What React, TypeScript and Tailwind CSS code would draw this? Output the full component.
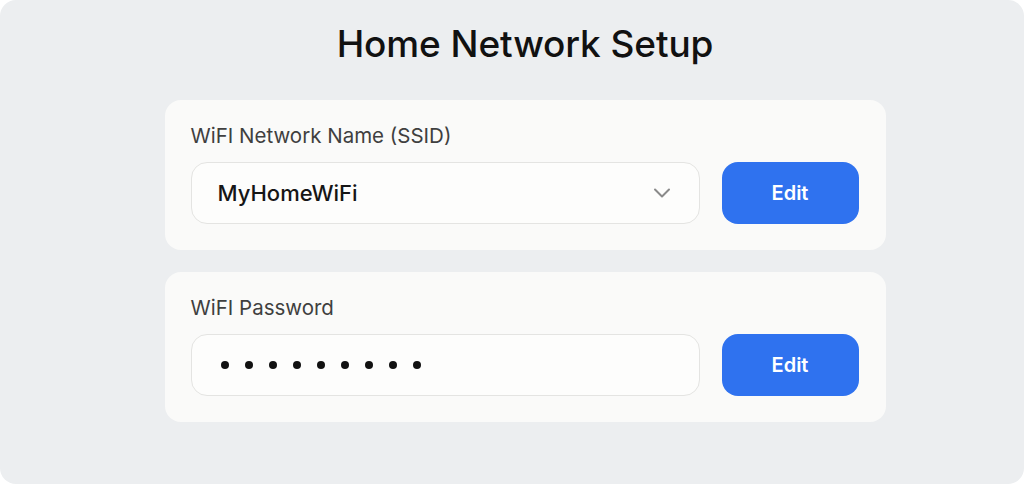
import { ReactNode } from "react";

function Chevron() {
  return (
    <svg width="20" height="12" viewBox="0 0 20 12" fill="none">
      <polyline
        points="3,2.5 10,9.5 17,2.5"
        stroke="#8a8a8a"
        strokeWidth="2"
        strokeLinecap="round"
        strokeLinejoin="round"
      />
    </svg>
  );
}

function EditButton() {
  return (
    <button className="w-[137px] h-[62px] shrink-0 rounded-2xl bg-[#2f72ef] text-white text-[20px] font-semibold">
      Edit
    </button>
  );
}

function FieldCard({ label, children }: { label: string; children: ReactNode }) {
  return (
    <section className="w-[721px] rounded-2xl bg-[#fafaf9] pt-[22px] pb-[26px] pl-[26px] pr-[27px]">
      <div className="text-[20.5px] leading-[28px] text-[#3f3f3f]">{label}</div>
      <div className="mt-3 flex items-center gap-[22px]">
        <div className="w-[509px] h-[62px] rounded-2xl border border-[#e4e4e2] bg-[#fdfdfc] flex items-center">
          {children}
        </div>
        <EditButton />
      </div>
    </section>
  );
}

export default function App() {
  const dots = Array.from({ length: 9 });
  return (
    <div className="w-[1024px] h-[484px] bg-white" style={{ fontFamily: "Inter, 'Noto Sans', sans-serif" }}>
      <div className="h-full rounded-2xl bg-[#eceef0] flex flex-col items-center pt-5 pl-[26px]">
        <h1 className="text-[37px] leading-[48px] font-medium text-[#111] tracking-[-0.1px]">
          Home Network Setup
        </h1>
        <div className="mt-8 flex flex-col gap-[22px]">
          <FieldCard label="WiFI Network Name (SSID)">
            <div className="flex-1 pl-[26px] text-[22px] font-medium text-[#161616]">MyHomeWiFi</div>
            <div className="pr-[27px]">
              <Chevron />
            </div>
          </FieldCard>
          <FieldCard label="WiFI Password">
            <div className="pl-[29px] flex items-center gap-4">
              {dots.map((_, i) => (
                <span key={i} className="w-2 h-2 rounded-full bg-[#111]" />
              ))}
            </div>
          </FieldCard>
        </div>
      </div>
    </div>
  );
}
